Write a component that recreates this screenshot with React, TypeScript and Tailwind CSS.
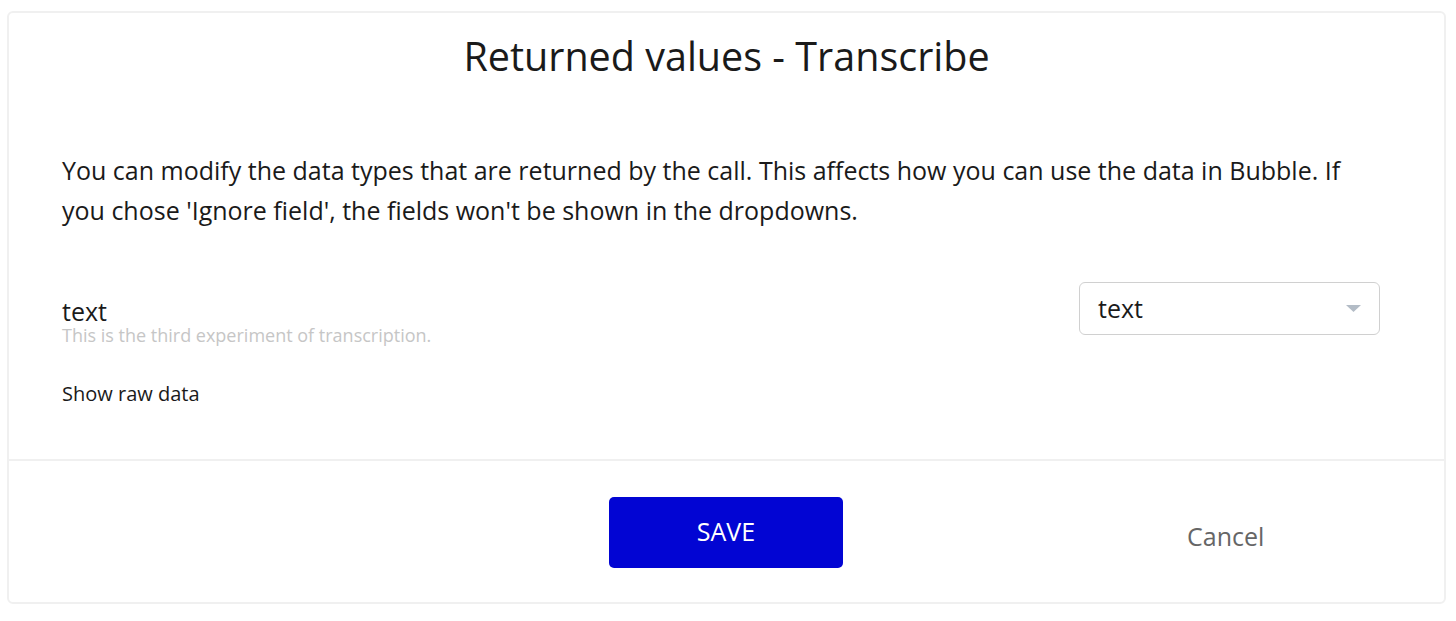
export default function App() {
  return (
    <div className="min-h-[621px] w-full bg-white pt-[11px] pl-[7px] pr-[10px] font-['Open_Sans',sans-serif] text-[#1a1a1a]">
      <div className="h-[593px] rounded-[6px] border-2 border-[#f0f0f0] bg-white flex flex-col">
        <h1 className="pt-[17px] text-center text-[39.5px] leading-[52px] text-[#1a1a1a]">
          Returned values - Transcribe
        </h1>

        <div className="flex-1 px-[53px] pt-[68px]">
          <p className="mr-[11px] text-[25px] leading-[40px] text-[#1a1a1a]">
            You can modify the data types that are returned by the call. This affects how you can use the data in Bubble. If
            you chose 'Ignore field', the fields won't be shown in the dropdowns.
          </p>

          <div className="mt-[52px] flex items-start justify-between pr-[11px]">
            <div className="pt-[17px]">
              <div className="text-[25px] leading-[24px]">text</div>
              <div className="text-[18px] leading-[24px] text-[#c6c6c6]">
                This is the third experiment of transcription.
              </div>
            </div>
            <div className="flex h-[53px] w-[301px] items-center justify-between rounded-[6px] border border-[#d0d0d0] pl-[18px] pr-[18px]">
              <span className="text-[25px]">text</span>
              <svg width="15" height="8" viewBox="0 0 15 8">
                <path d="M0 0 L15 0 L7.5 7 Z" fill="#b3bcc6" />
              </svg>
            </div>
          </div>

          <div className="mt-[35px] text-[20px] leading-[24px]">Show raw data</div>
        </div>

        <div className="h-[143px] border-t-2 border-[#f0f0f0] flex items-center pl-[600px]">
          <button className="mt-[1px] h-[71px] w-[234px] rounded-[5px] bg-[#0205d3] text-[25px] text-white">
            SAVE
          </button>
          <span className="ml-[344px] mt-[10px] text-[25px] text-[#666666]">Cancel</span>
        </div>
      </div>
    </div>
  );
}
